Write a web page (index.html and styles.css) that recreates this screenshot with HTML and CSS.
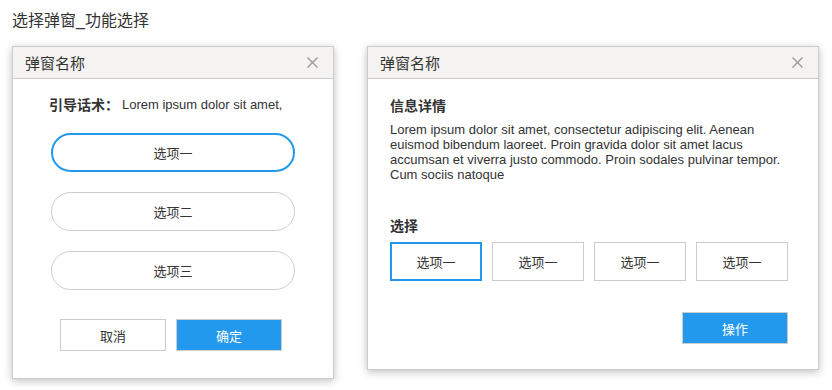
FILE: index.html
```html
<!DOCTYPE html>
<html lang="zh-CN">
<head>
<meta charset="UTF-8">
<meta name="viewport" content="width=device-width, initial-scale=1.0">
<title>选择弹窗_功能选择</title>
<link rel="stylesheet" href="styles.css">
</head>
<body>
<div class="page-title">选择弹窗_功能选择</div>

<div class="dialogs">
    <div class="dialog dialog-small">
        <div class="dialog-header">
            <span class="dialog-title">弹窗名称</span>
            <svg class="close" width="11" height="11" viewBox="0 0 11 11">
                <path d="M0.5 0.5L10.5 10.5M10.5 0.5L0.5 10.5" stroke="#9a9a9a" stroke-width="1.4" fill="none"/>
            </svg>
        </div>
        <div class="dialog-body">
            <div class="guide">
                <span class="guide-label">引导话术：</span>
                <span class="guide-text">Lorem ipsum dolor sit amet,</span>
            </div>
            <div class="pill-list">
                <div class="pill active">选项一</div>
                <div class="pill">选项二</div>
                <div class="pill">选项三</div>
            </div>
            <div class="btn-row">
                <button class="btn">取消</button>
                <button class="btn btn-primary">确定</button>
            </div>
        </div>
    </div>

    <div class="dialog dialog-wide">
        <div class="dialog-header">
            <span class="dialog-title">弹窗名称</span>
            <svg class="close" width="11" height="11" viewBox="0 0 11 11">
                <path d="M0.5 0.5L10.5 10.5M10.5 0.5L0.5 10.5" stroke="#9a9a9a" stroke-width="1.4" fill="none"/>
            </svg>
        </div>
        <div class="dialog-body">
            <div class="section-title">信息详情</div>
            <p class="info">Lorem ipsum dolor sit amet, consectetur adipiscing elit. Aenean euismod bibendum laoreet. Proin gravida dolor sit amet lacus accumsan et viverra justo commodo. Proin sodales pulvinar tempor. Cum sociis natoque</p>
            <div class="section-title choose-title">选择</div>
            <div class="box-list">
                <div class="box active">选项一</div>
                <div class="box">选项一</div>
                <div class="box">选项一</div>
                <div class="box">选项一</div>
            </div>
            <div class="action-row">
                <button class="btn btn-primary">操作</button>
            </div>
        </div>
    </div>
</div>
</body>
</html>
```

FILE: styles.css
```css
body {
    margin: 0;
    padding: 11px 12px;
    font-family: "Liberation Sans", "Noto Sans CJK SC", sans-serif;
    color: #333;
    background: #fff;
}

.page-title {
    font-size: 16px;
    line-height: 20px;
}

.dialogs {
    display: flex;
    align-items: flex-start;
    gap: 33px;
    margin-top: 15px;
}

.dialog {
    border: 1px solid #cccccc;
    background: #fff;
    box-shadow: 0 2px 8px rgba(0, 0, 0, 0.25);
}

.dialog-small {
    width: 320px;
}

.dialog-wide {
    width: 450px;
}

.dialog-header {
    display: flex;
    align-items: center;
    justify-content: space-between;
    height: 31px;
    padding: 0 15px 0 12px;
    background: #f4f3f1;
    border-bottom: 1px solid #cccccc;
}

.dialog-title {
    font-size: 15px;
}

/* left dialog */
.dialog-small .dialog-body {
    padding: 15px 38px 27px;
}

.guide {
    display: flex;
    align-items: center;
    height: 20px;
    margin-left: -2px;
}

.guide-label {
    font-size: 14px;
    font-weight: bold;
}

.guide-text {
    margin-left: 3px;
    font-size: 13px;
}

.pill-list {
    display: flex;
    flex-direction: column;
    gap: 20px;
    margin-top: 19px;
}

.pill {
    display: flex;
    align-items: center;
    justify-content: center;
    height: 37px;
    border: 1px solid #cccccc;
    border-radius: 20px;
    font-size: 13px;
}

.pill.active {
    height: 35px;
    border: 2px solid #2399ee;
}

.btn-row {
    display: flex;
    justify-content: center;
    gap: 10px;
    margin-top: 29px;
    padding-right: 4px;
}

.btn {
    width: 106px;
    height: 32px;
    border: 1px solid #cccccc;
    background: #fff;
    color: #333;
    font-family: inherit;
    font-size: 13px;
    padding: 0;
}

.btn-primary {
    background: #2399ee;
    color: #fff;
}

/* right dialog */
.dialog-wide .dialog-body {
    padding: 17px 22px 25px;
}

.section-title {
    font-size: 14px;
    font-weight: bold;
    line-height: 20px;
}

.info {
    margin: 6px 0 0;
    font-size: 13px;
    line-height: 15px;
}

.choose-title {
    margin-top: 34px;
}

.box-list {
    display: flex;
    gap: 10px;
    margin-top: 6px;
}

.box {
    display: flex;
    align-items: center;
    justify-content: center;
    width: 90px;
    height: 37px;
    border: 1px solid #cccccc;
    font-size: 13px;
}

.box.active {
    width: 88px;
    height: 35px;
    border: 2px solid #2399ee;
}

.action-row {
    display: flex;
    justify-content: flex-end;
    margin-top: 31px;
    padding-right: 8px;
}
```
